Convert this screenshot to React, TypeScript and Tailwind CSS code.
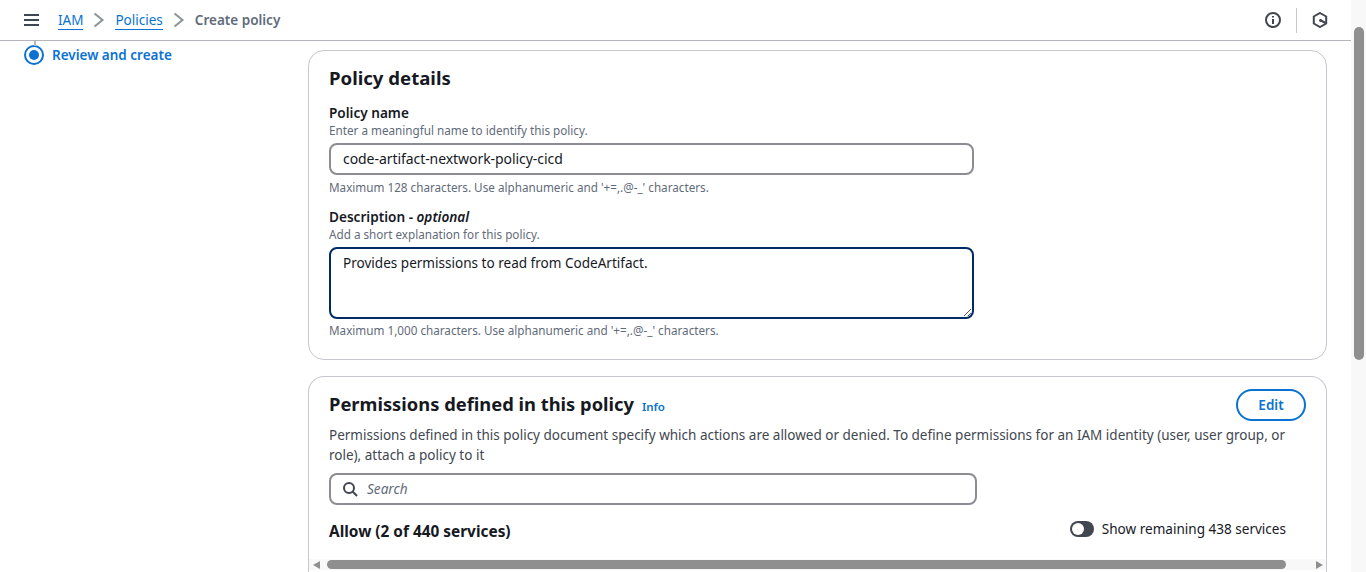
import React from "react";

function Chevron() {
  return (
    <svg width="12" height="16" viewBox="0 0 12 16" fill="none" stroke="#879596" strokeWidth="2" className="mx-[10px]">
      <path d="M1.5 1.5 L9.5 8 L1.5 14.5" />
    </svg>
  );
}

function Hint({ children }: { children: React.ReactNode }) {
  return <div className="text-[11.7px] leading-[16px] text-[#5f6b7a]">{children}</div>;
}

export default function App() {
  return (
    <div className="h-[572px] w-[1366px] overflow-hidden flex bg-white text-[#16191f] font-['Noto_Sans','Open_Sans',sans-serif]">
      <div className="w-[1351px] shrink-0 flex flex-col">
        <header className="h-[41px] shrink-0 border-b border-[#b4b4bb] flex items-center pl-[24px] pr-[23px]">
          <svg width="15" height="12" viewBox="0 0 15 12" stroke="#414750" strokeWidth="2" className="mr-[19px]">
            <path d="M0 1h15M0 6h15M0 11h15" />
          </svg>
          <a className="text-[13.5px] leading-[18px] text-[#0972d3] border-b border-[#0972d3]">IAM</a>
          <Chevron />
          <a className="text-[13.5px] leading-[18px] text-[#0972d3] border-b border-[#0972d3]">Policies</a>
          <Chevron />
          <span className="text-[13.5px] font-semibold text-[#5f6b7a]">Create policy</span>
          <div className="ml-auto flex items-center">
            <svg width="16" height="16" viewBox="0 0 16 16" fill="none" stroke="#414750" strokeWidth="2">
              <circle cx="8" cy="8" r="7" />
              <path d="M8 7v5M8 4v1.6" />
            </svg>
            <div className="w-px h-[25px] bg-[#c6c6cd] mx-[15px]" />
            <svg width="16" height="16" viewBox="0 0 16 16" fill="none" stroke="#414750" strokeWidth="2">
              <path d="M8 1 L14.2 4.5 V11.5 L8 15 L1.8 11.5 V4.5 Z" />
              <path d="M8 8 L13.5 11" />
              <circle cx="8.5" cy="8.5" r="1.4" fill="#414750" stroke="none" />
            </svg>
          </div>
        </header>

        <div className="flex-1 flex min-h-0 pl-[24px] pr-[24px] relative">
          <div className="w-[284px] shrink-0 relative">
            <div className="absolute left-[10px] top-[-1px] w-[2px] h-[6px] bg-[#b4b4bb]" />
            <div className="flex items-center gap-[8px] mt-[4px] h-[20px]">
              <span className="w-[20px] h-[20px] rounded-full border-2 border-[#0972d3] flex items-center justify-center">
                <span className="w-[10px] h-[10px] rounded-full bg-[#0972d3]" />
              </span>
              <span className="text-[13.5px] leading-[18px] font-semibold text-[#0972d3]">Review and create</span>
            </div>
          </div>

          <div className="w-[1019px] shrink-0 pt-[9px] flex flex-col gap-[16px]">
            <section className="h-[310px] shrink-0 rounded-[16px] border border-[#c6c6cd] px-[20px] pt-[13px]">
              <h2 className="text-[18.6px] leading-[28px] font-bold">Policy details</h2>
              <div className="text-[13.6px] leading-[18px] font-semibold mt-[12px]">Policy name</div>
              <Hint>Enter a meaningful name to identify this policy.</Hint>
              <div className="w-[645px] h-[32px] mt-[5px] rounded-[8px] border-2 border-[#8c8c94] px-[12px] text-[14px] tracking-[-0.06px] leading-[27px]">
                code-artifact-nextwork-policy-cicd
              </div>
              <div className="mt-[4px]"><Hint>Maximum 128 characters. Use alphanumeric and '+=,.@-_' characters.</Hint></div>
              <div className="text-[13.6px] leading-[18px] font-semibold mt-[13px]">
                Description - <em>optional</em>
              </div>
              <Hint>Add a short explanation for this policy.</Hint>
              <div className="relative w-[645px] h-[72px] mt-[5px] rounded-[8px] border-2 border-[#002b66] px-[12px] pt-[4px] text-[13.55px] leading-[20px]">
                Provides permissions to read from CodeArtifact.
                <svg width="9" height="9" viewBox="0 0 9 9" stroke="#555" strokeWidth="1" className="absolute right-0 bottom-0">
                  <path d="M1 8 L8 1M5 8 L8 5" />
                </svg>
              </div>
              <div className="mt-[3px]"><Hint>Maximum 1,000 characters. Use alphanumeric and '+=,.@-_' characters.</Hint></div>
            </section>

            <section className="relative flex-1 rounded-t-[16px] border border-[#c6c6cd] border-b-0 px-[20px] pt-[12px] min-h-0">
              <div className="flex items-start justify-between">
                <div className="flex items-baseline gap-[8px] pt-[2px]">
                  <h2 className="text-[18.35px] leading-[26px] font-bold">Permissions defined in this policy</h2>
                  <a className="text-[11.5px] font-semibold text-[#0972d3]">Info</a>
                </div>
                <button className="w-[70px] h-[32px] rounded-full border-2 border-[#0972d3] text-[13.5px] font-semibold text-[#0972d3]">Edit</button>
              </div>
              <p className="text-[13.5px] leading-[20px] text-[#414750] mt-[4px] w-[970px]">
                Permissions defined in this policy document specify which actions are allowed or denied. To define permissions for an IAM identity (user, user group, or role), attach a policy to it
              </p>
              <div className="w-[648px] h-[32px] mt-[8px] rounded-[8px] border-2 border-[#8c8c94] flex items-center pl-[11px] gap-[9px]">
                <svg width="16" height="16" viewBox="0 0 16 16" fill="none" stroke="#414750" strokeWidth="2">
                  <circle cx="7" cy="7" r="5" />
                  <path d="M10.8 10.8 L15 15" />
                </svg>
                <span className="text-[13.6px] leading-[18px] italic text-[#5f6b7a] -mt-[1px]">Search</span>
              </div>
              <div className="flex items-start justify-between mt-[12px] pr-[20px]">
                <span className="text-[15.4px] leading-[26px] font-bold mt-[2px]">Allow (2 of 440 services)</span>
                <div className="flex items-center gap-[8px] h-[24px]">
                  <span className="w-[24px] h-[16px] rounded-full bg-[#414750] flex items-center pl-[2px]">
                    <span className="w-[12px] h-[12px] rounded-full bg-white" />
                  </span>
                  <span className="text-[13.55px] leading-[20px]">Show remaining 438 services</span>
                </div>
              </div>
              <div className="absolute left-0 right-0 top-[182px] h-[11px] bg-[#f8f8f8] flex items-center pl-[4px] pr-[3px]">
                <span className="w-0 h-0 border-y-[4px] border-y-transparent border-r-[7px] border-r-[#8f8f8f]" />
                <span className="ml-[7px] w-[959px] h-[9px] rounded-full bg-[#8f8f8f]" />
                <span className="ml-auto w-0 h-0 border-y-[4px] border-y-transparent border-l-[7px] border-l-[#8f8f8f]" />
              </div>
            </section>
          </div>
        </div>
      </div>
      <div className="w-[15px] shrink-0 bg-[#f8f8f8] pt-[27px] pl-[3px]">
        <div className="w-[10px] h-[333px] rounded-full bg-[#8f8f8f]" />
      </div>
    </div>
  );
}
